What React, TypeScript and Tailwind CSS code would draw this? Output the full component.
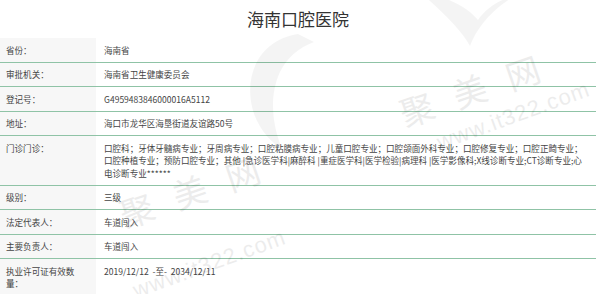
import React from "react";

const rows: { label: React.ReactNode; value: React.ReactNode }[] = [
  { label: "省份：", value: "海南省" },
  { label: "审批机关：", value: "海南省卫生健康委员会" },
  { label: "登记号：", value: "G4959483846000016A5112" },
  { label: "地址：", value: "海口市龙华区海垦街道友谊路50号" },
  {
    label: "门诊门诊：",
    value: (
      <>
        口腔科；牙体牙髓病专业；牙周病专业；口腔粘膜病专业；儿童口腔专业；口腔颌面外科专业；口腔修复专业；口腔正畸专业；
        <br />
        口腔种植专业；预防口腔专业；其他 |急诊医学科|麻醉科 |重症医学科|医学检验|病理科 |医学影像科;X线诊断专业;CT诊断专业;心
        <br />
        电诊断专业******
      </>
    ),
  },
  { label: "级别：", value: "三级" },
  { label: "法定代表人：", value: "车道闯入" },
  { label: "主要负责人：", value: "车道闯入" },
  {
    label: (
      <>
        执业许可证有效数
        <br />
        量：
      </>
    ),
    value: <span className="whitespace-pre">2019/12/12  -至-  2034/12/11</span>,
  },
];

function Mark({ pos, www }: { pos: string; www: string }) {
  return (
    <>
      <div
        className={`absolute ${pos} text-[34px] leading-[50px] text-black opacity-[0.07] tracking-[22px] whitespace-nowrap`}
        style={{ transform: "rotate(-19deg)", fontFamily: '"Noto Sans CJK SC", sans-serif' }}
      >
        聚美网
      </div>
      <div
        className={`absolute ${www} text-[22px] leading-[32px] text-black opacity-[0.07] tracking-[1px] whitespace-nowrap`}
        style={{ transform: "rotate(-20deg)", fontFamily: '"Liberation Sans", sans-serif' }}
      >
        www.it322.com
      </div>
    </>
  );
}

export default function App() {
  return (
    <div
      className="relative w-[600px] h-[294px] overflow-hidden bg-white text-[#444]"
      style={{ fontFamily: '"Noto Sans CJK SC", "Liberation Sans", sans-serif' }}
    >
      <div className="w-[596px]">
        <div className="h-[38px] flex items-center justify-center text-[17px] text-[#333]">
          海南口腔医院
        </div>
        <div className="flex flex-col">
          {rows.map((r, i) => (
            <div key={i} className="flex border-b border-[#8fc3a6] text-[8.55px] leading-[12.5px]">
              <div className="w-[96px] shrink-0 bg-[#f7f7f7] pl-[6px] pr-[6px] py-[5.5px]">{r.label}</div>
              <div className="flex-1 pl-[8px] py-[5.5px] whitespace-nowrap">{r.value}</div>
            </div>
          ))}
        </div>
      </div>

      {/* watermark overlay */}
      <div className="pointer-events-none absolute inset-0 select-none">
        <Mark pos="left-[396px] top-[62px]" www="left-[433px] top-[100px]" />
        <Mark pos="left-[116px] top-[163px]" www="left-[129px] top-[248px]" />
        <svg className="absolute left-[236px] top-[30px]" width="80" height="120" viewBox="0 0 80 120">
          <path d="M62 4 C22 10 6 48 18 84 C25 102 36 113 46 119 C36 94 33 66 44 42 C51 28 62 18 78 12 Z" fill="#000" opacity="0.045" />
        </svg>
        <svg className="absolute left-[410px] top-[-8px]" width="110" height="56" viewBox="0 0 110 56">
          <path d="M10 0 C30 18 50 36 60 54 C66 38 80 18 105 4 C90 7 76 16 68 28 C58 16 40 5 10 0 Z" fill="#000" opacity="0.045" />
        </svg>
      </div>
    </div>
  );
}
